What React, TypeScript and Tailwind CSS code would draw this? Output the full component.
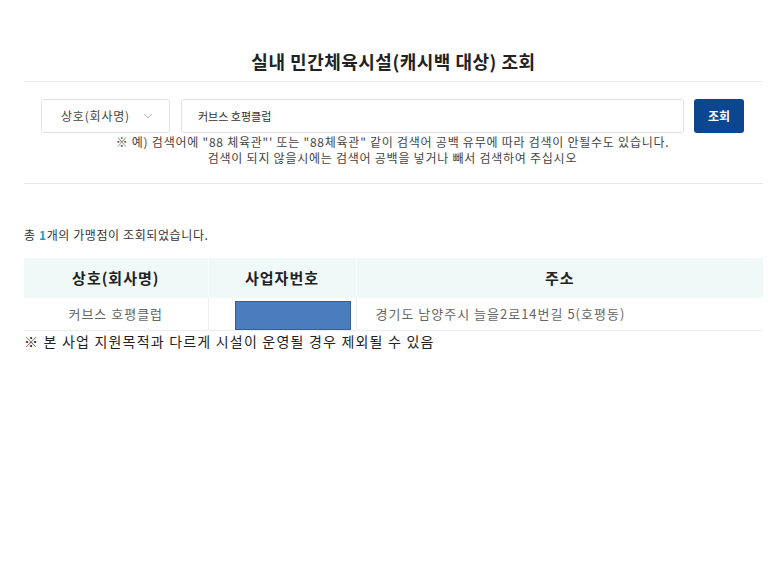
import { ChevronDown } from 'lucide-react';

const font = { fontFamily: '"Noto Sans CJK KR", "Noto Sans", sans-serif' };

export default function App() {
  return (
    <div className="min-h-screen w-full bg-white text-[#222]" style={font}>
      <div className="ml-[24px] mr-[10px] pt-[47px]">
        <h1 className="text-center text-[18px] font-bold leading-[28px] tracking-[0.5px] text-[#222]">
          실내 민간체육시설(캐시백 대상) 조회
        </h1>
        <div className="mt-[6px] border-t border-[#ececec]" />

        {/* search */}
        <div className="pl-[17px] pr-[19px] pt-[17px]">
          <div className="flex h-[34px] items-stretch">
            <div className="flex w-[129px] items-center justify-between rounded-[3px] border border-[#e3e3e3] pl-[19px] pr-[14px] text-[12px] tracking-[0.8px] text-[#444]">
              <span>상호(회사명)</span>
              <ChevronDown className="h-[14px] w-[14px] text-[#999]" strokeWidth={1.5} />
            </div>
            <div className="ml-[11px] flex flex-1 items-center rounded-[3px] border border-[#e3e3e3] pl-[16px] text-[11px] text-[#333]">
              커브스 호평클럽
            </div>
            <button className="ml-[10px] w-[50px] rounded-[3px] bg-[#0b4690] text-[12px] font-bold text-white">
              조회
            </button>
          </div>
          <div className="mt-[1px] text-center text-[12px] leading-[16px] tracking-[0.75px] text-[#444]">
            <p>※ 예) 검색어에 "88 체육관"' 또는 "88체육관" 같이 검색어 공백 유무에 따라 검색이 안될수도 있습니다.</p>
            <p>검색이 되지 않을시에는 검색어 공백을 넣거나 빼서 검색하여 주십시오</p>
          </div>
        </div>
        <div className="mt-[17px] border-t border-[#e6e6e6]" />

        <p className="mt-[43px] text-[12px] leading-[16px] tracking-[0.6px] text-[#333]">
          총 <span className="font-bold text-[#1a9bc7]">1</span>개의 가맹점이 조회되었습니다.
        </p>

        <table className="mt-[15px] w-full border-collapse">
          <thead>
            <tr className="h-[40px] bg-[#f1f8f8] text-[15px] font-bold tracking-[1px] text-[#222]">
              <th className="w-[184px] border-r border-[#fafdfd] font-bold">상호(회사명)</th>
              <th className="w-[148px] border-r border-[#fafdfd] font-bold">사업자번호</th>
              <th className="font-bold">주소</th>
            </tr>
          </thead>
          <tbody>
            <tr className="h-[31px] border-b border-[#eeeeee] text-[13px] tracking-[1px] text-[#666]">
              <td className="border-r border-[#f0f0f0] text-center">커브스 호평클럽</td>
              <td className="border-r border-[#f0f0f0] pt-[3px] align-top">
                <div className="ml-[26px] h-[29px] w-[116px] border border-[#3b5f93] bg-[#4b7cbd]" />
              </td>
              <td className="pl-[19px]">경기도 남양주시 늘을2로14번길 5(호평동)</td>
            </tr>
          </tbody>
        </table>

        <p className="text-[14px] leading-[20px] tracking-[1.2px] text-[#222]">
          ※ 본 사업 지원목적과 다르게 시설이 운영될 경우 제외될 수 있음
        </p>
      </div>
    </div>
  );
}
